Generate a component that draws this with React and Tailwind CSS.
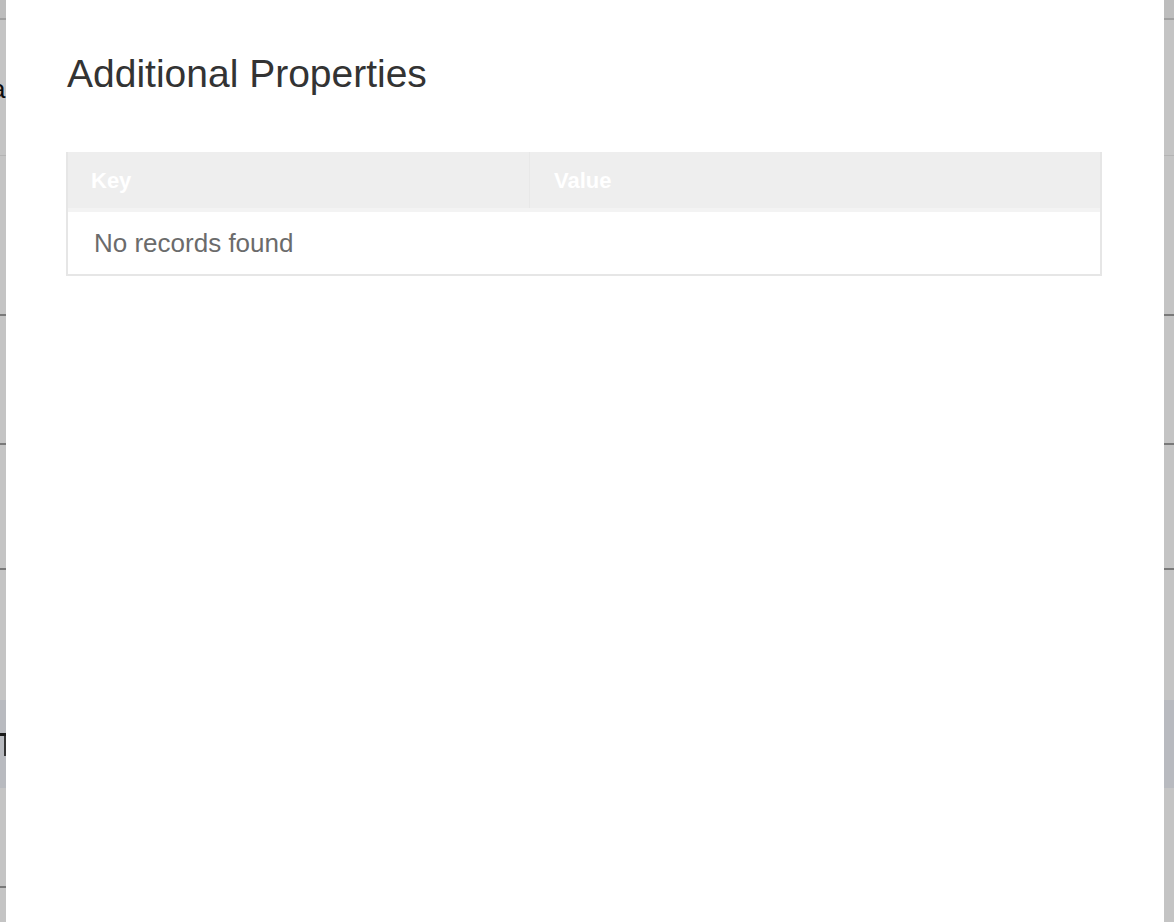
export default function App() {
  const font = { fontFamily: '"Liberation Sans", Arial, Helvetica, sans-serif' };
  return (
    <div className="relative h-[922px] w-[1174px] overflow-hidden bg-white" style={font}>
      {/* background page */}
      <div className="flex h-full flex-col">
        <div className="h-[20px] border-b-2 border-[#d0d0d0] bg-[#f6f6f6]" />
        <div className="flex h-[136px] items-center border-b border-[#eaeaea]">
          <span className="ml-[-9px] pt-[4px] text-[26px] text-[#111]">a</span>
        </div>
        <div className="h-[160px] border-b-2 border-[#9e9e9e]" />
        <div className="h-[129px] border-b-2 border-[#9e9e9e]" />
        <div className="h-[125px] border-b-2 border-[#9e9e9e]" />
        <div className="h-[130px]" />
        <div className="flex h-[88px] flex-col bg-[#f0f2f9] pt-[33px]">
          <div className="h-[3px] w-[40px] bg-[#222]" />
          <div className="ml-[4px] h-[20px] w-[2px] bg-[#444]" />
        </div>
        <div className="h-[100px] w-[600px] border-b-2 border-[#9e9e9e]" />
      </div>

      {/* overlay */}
      <div className="absolute inset-0 bg-black/[0.23]" />

      {/* modal */}
      <div className="absolute top-0 bottom-0 left-[6px] right-[10px] bg-white pl-[61px] pr-[62px] pt-[52px]">
        <h1 className="text-[39px] leading-[43px] font-normal text-[#333]">Additional Properties</h1>
        <div className="mt-[57px] ml-[-1px] border-2 border-t-0 border-[#e6e6e6]">
          <div className="flex h-[60px] border-b-4 border-[#f3f3f3] bg-[#eeeeee] text-[22px] font-bold text-white">
            <div className="flex w-[462px] items-center border-r border-[#e8e8e8] pl-[23px]">Key</div>
            <div className="flex flex-1 items-center pl-[24px]">Value</div>
          </div>
          <div className="flex h-[62px] items-center pl-[26px] text-[26px] text-[#6b6b6b]">No records found</div>
        </div>
      </div>
    </div>
  );
}
